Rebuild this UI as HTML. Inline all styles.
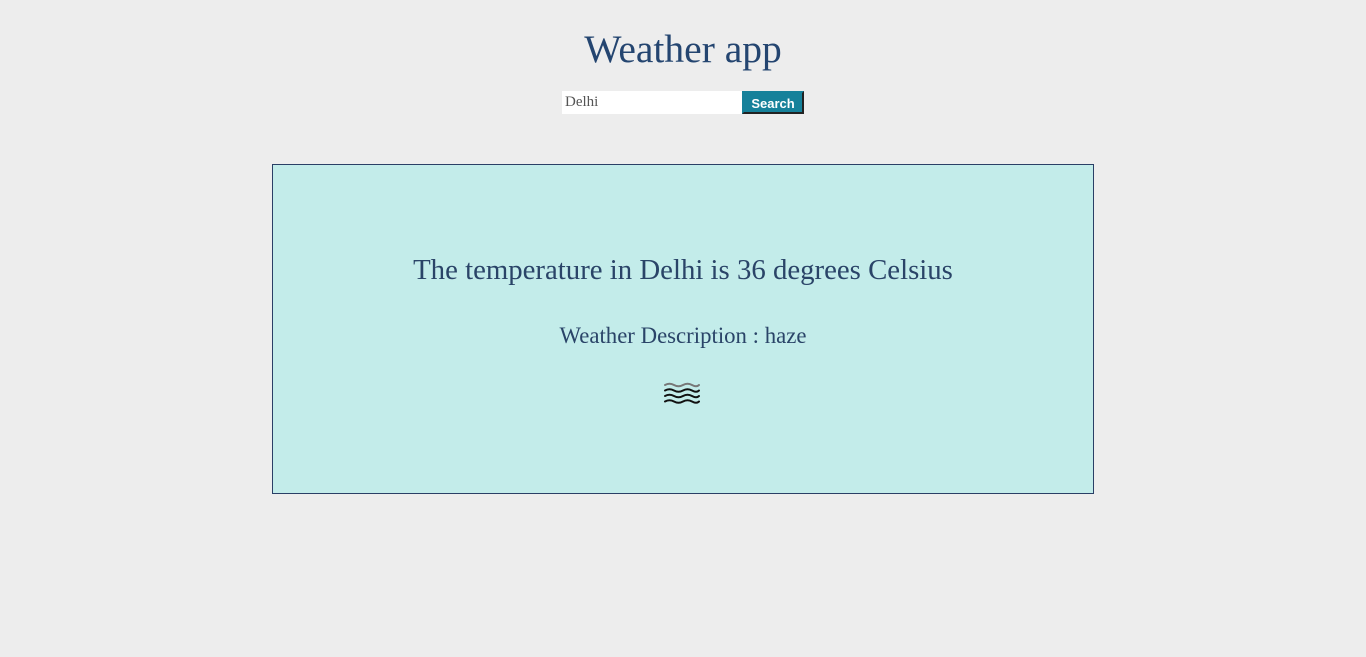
<!DOCTYPE html>
<html><head><style>
body{margin:0;background:#ededed;width:1366px;height:657px;position:relative;font-family:"Liberation Serif",serif;color:#2a4468}
h1{position:absolute;top:26px;left:0;width:1366px;text-align:center;margin:0;font-weight:normal;font-size:39.5px;color:#244570}
.in{position:absolute;left:562px;top:91px;width:180px;height:23px;background:#fff;font-size:15px;line-height:23px;color:#555;box-sizing:border-box;padding-left:3px}
.btn{position:absolute;left:742px;top:91px;width:62px;height:23px;background:#16819a;color:#fff;font-family:"Liberation Sans",sans-serif;font-weight:bold;font-size:13px;line-height:21px;text-align:center;box-sizing:border-box;border:2px solid;border-color:#16819a #222 #222 #16819a}
.card{position:absolute;left:272px;top:164px;width:822px;height:330px;box-sizing:border-box;border:1px solid #2a3f66;background:#c3ecea}
.t{position:absolute;top:254px;width:1366px;text-align:center;font-size:28.8px;color:#2a4468}
.d{position:absolute;top:323px;width:1366px;text-align:center;font-size:22.8px;color:#2a4468}
</style></head><body>
<h1>Weather app</h1>
<div class="in">Delhi</div>
<div class="btn">Search</div>
<div class="card"></div>
<div class="t">The temperature in Delhi is 36 degrees Celsius</div>
<div class="d">Weather Description : haze</div>
<svg style="position:absolute;left:663px;top:381px" width="38" height="24" viewBox="0 0 38 24" fill="none" stroke-width="2" stroke-linecap="round">
<path d="M2 4 Q6.5 1.5 11 4 T20 4 T29 4 T36 4" stroke="#777"/>
<path d="M2 9.5 Q6.5 7 11 9.5 T20 9.5 T29 9.5 T36 9.5" stroke="#111"/>
<path d="M2 15 Q6.5 12.5 11 15 T20 15 T29 15 T36 15" stroke="#111"/>
<path d="M2 20.5 Q6.5 18 11 20.5 T20 20.5 T29 20.5 T36 20.5" stroke="#111"/>
</svg>
</body></html>
